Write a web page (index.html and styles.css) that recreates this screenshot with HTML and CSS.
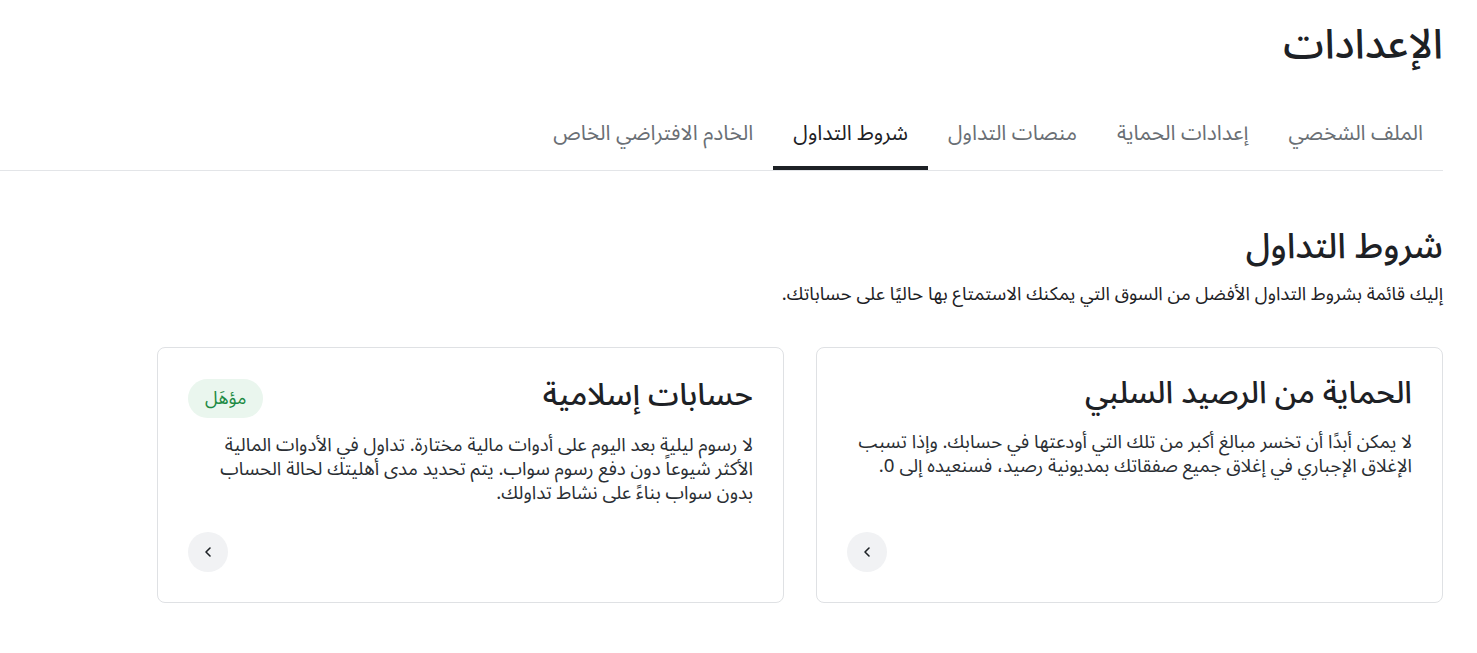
FILE: index.html
```html
<!DOCTYPE html>
<html lang="ar" dir="rtl">
<head>
	<meta charset="utf-8">
	<title>الإعدادات</title>
	<link rel="stylesheet" href="styles.css">
</head>
<body>
   <div class="page">
      <h1 class="page-title">الإعدادات</h1>

      <div class="tabs">
         <a class="tab">الملف الشخصي</a>
         <a class="tab">إعدادات الحماية</a>
         <a class="tab">منصات التداول</a>
         <a class="tab active">شروط التداول</a>
         <a class="tab">الخادم الافتراضي الخاص</a>
      </div>

      <div class="section">
         <h2 class="section-title">شروط التداول</h2>
         <p class="section-desc">إليك قائمة بشروط التداول الأفضل من السوق التي يمكنك الاستمتاع بها حاليًا على حساباتك.</p>

         <div class="cards">
            <div class="card">
               <div class="card-head">
                  <h3 class="card-title">الحماية من الرصيد السلبي</h3>
               </div>
               <p class="card-text">لا يمكن أبدًا أن تخسر مبالغ أكبر من تلك التي أودعتها في حسابك. وإذا تسبب الإغلاق الإجباري في إغلاق جميع صفقاتك بمديونية رصيد، فسنعيده إلى 0.</p>
               <div class="card-foot">
                  <button class="arrow-btn">
                     <svg width="16" height="16" viewBox="0 0 16 16"><path d="M10 4 L6 8 L10 12" fill="none" stroke="#1d2125" stroke-width="1.6" stroke-linecap="round" stroke-linejoin="round"/></svg>
                  </button>
               </div>
            </div>

            <div class="card">
               <div class="card-head">
                  <h3 class="card-title">حسابات إسلامية</h3>
                  <span class="badge">مؤهَل</span>
               </div>
               <p class="card-text">لا رسوم ليلية بعد اليوم على أدوات مالية مختارة. تداول في الأدوات المالية الأكثر شيوعاً دون دفع رسوم سواب. يتم تحديد مدى أهليتك لحالة الحساب بدون سواب بناءً على نشاط تداولك.</p>
               <div class="card-foot">
                  <button class="arrow-btn">
                     <svg width="16" height="16" viewBox="0 0 16 16"><path d="M10 4 L6 8 L10 12" fill="none" stroke="#1d2125" stroke-width="1.6" stroke-linecap="round" stroke-linejoin="round"/></svg>
                  </button>
               </div>
            </div>
         </div>
      </div>
   </div>
</body>
</html>
```

FILE: styles.css
```css
body{
	margin: 0;
	font-family: "Noto Sans Arabic", "DejaVu Sans", "Noto Sans", sans-serif;
	color: #1d2125;
	background: #fff;
}
.page{
	width: 1443px;
	margin-right: 34px;
	padding-top: 20px;
}
.page-title{
	margin: 0;
	font-size: 41px;
	font-weight: 500;
	line-height: 50px;
}
.tabs{
	display: flex;
	margin-top: 38px;
	border-bottom: 1px solid #e3e5e8;
}
.tab{
	padding: 0 20px;
	height: 62px;
	line-height: 50px;
	font-size: 21px;
	color: #6a6f75;
	box-sizing: border-box;
	cursor: pointer;
}
.tab.active{
	color: #1d2125;
	border-bottom: 4px solid #1d2125;
	margin-bottom: -1px;
}
.section{
	padding-top: 54px;
}
.section-title{
	margin: 0;
	font-size: 35px;
	font-weight: 500;
	line-height: 44px;
}
.section-desc{
	margin: 12px 0 0;
	font-size: 18.5px;
	line-height: 28px;
}
.cards{
	display: grid;
	grid-template-columns: 1fr 1fr;
	gap: 32px;
	max-width: 1286px;
	margin-top: 38px;
}
.card{
	border: 1px solid #dfe1e4;
	border-radius: 8px;
	padding: 23px 30px 30px;
	height: 256px;
	box-sizing: border-box;
	display: flex;
	flex-direction: column;
}
.card-head{
	display: flex;
	justify-content: space-between;
	align-items: center;
}
.card-title{
	margin: 0;
	font-size: 31px;
	font-weight: 500;
	line-height: 44px;
}
.badge{
	background: #eaf6ee;
	color: #1c8a43;
	font-size: 18px;
	padding: 0 17px;
	height: 39px;
	line-height: 39px;
	border-radius: 20px;
	margin-top: 8px;
}
.card-text{
	margin: 15px 0 0;
	font-size: 18.7px;
	line-height: 24px;
	color: #2a2e33;
}
.card-foot{
	margin-top: auto;
}
.arrow-btn{
	width: 40px;
	height: 40px;
	border: 0;
	border-radius: 50%;
	background: #f1f2f4;
	display: flex;
	align-items: center;
	justify-content: center;
	margin-right: auto;
	padding: 0;
}
```
